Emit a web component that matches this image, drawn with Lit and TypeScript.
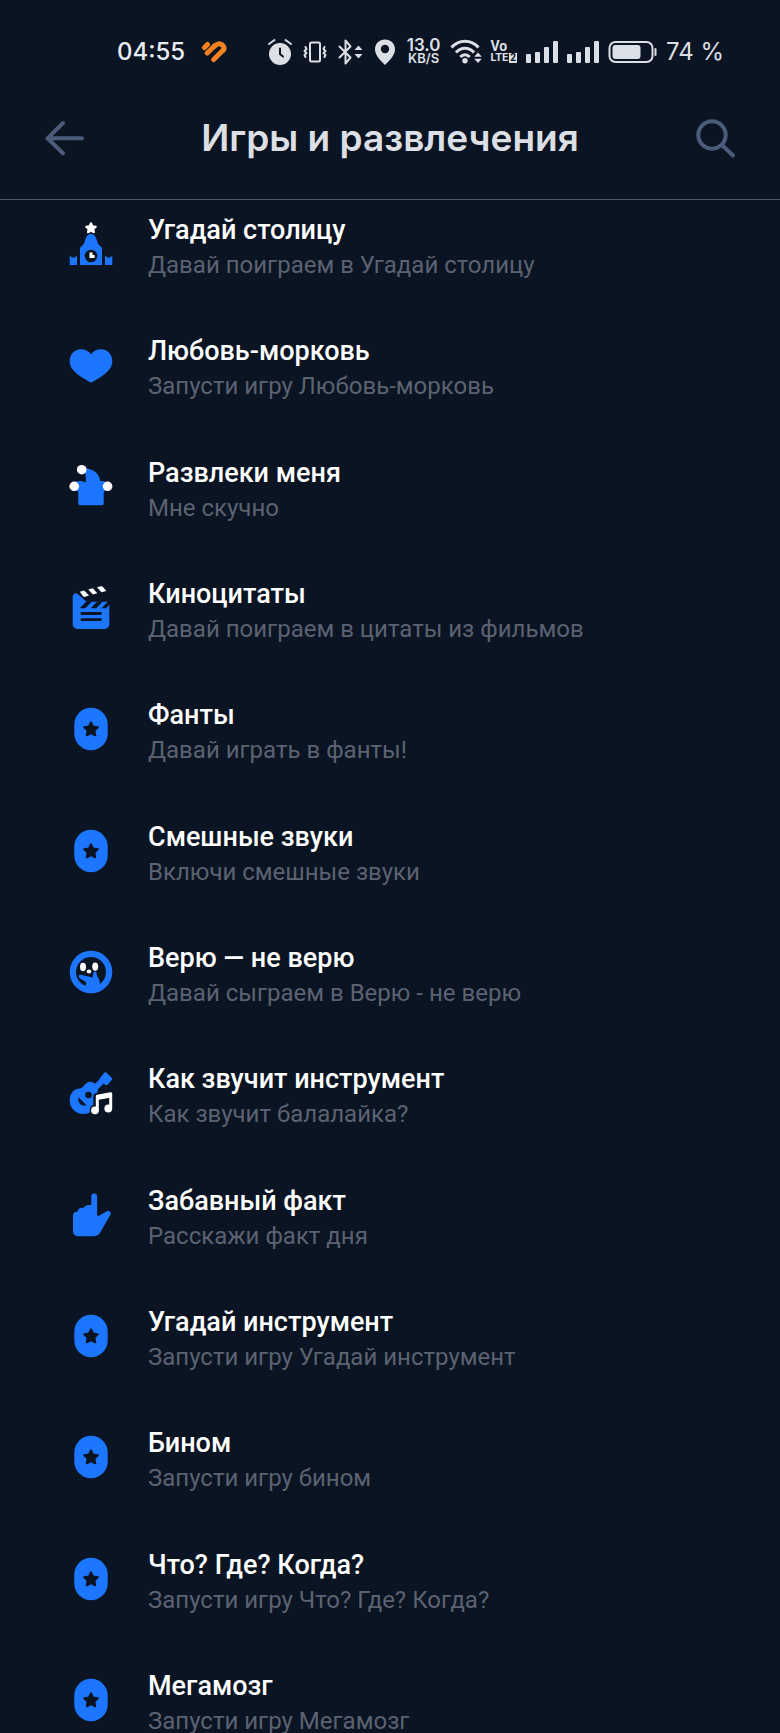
import { LitElement, html, css, svg, SVGTemplateResult } from "lit";
import { customElement, property } from "lit/decorators.js";

type IconName = "tower" | "heart" | "jester" | "clapper" | "token" | "face" | "guitar" | "finger";

interface Game {
  icon: IconName;
  title: string;
  phrase: string;
}

const GAMES: Game[] = [
  { icon: "tower", title: "Угадай столицу", phrase: "Давай поиграем в Угадай столицу" },
  { icon: "heart", title: "Любовь-морковь", phrase: "Запусти игру Любовь-морковь" },
  { icon: "jester", title: "Развлеки меня", phrase: "Мне скучно" },
  { icon: "clapper", title: "Киноцитаты", phrase: "Давай поиграем в цитаты из фильмов" },
  { icon: "token", title: "Фанты", phrase: "Давай играть в фанты!" },
  { icon: "token", title: "Смешные звуки", phrase: "Включи смешные звуки" },
  { icon: "face", title: "Верю — не верю", phrase: "Давай сыграем в Верю - не верю" },
  { icon: "guitar", title: "Как звучит инструмент", phrase: "Как звучит балалайка?" },
  { icon: "finger", title: "Забавный факт", phrase: "Расскажи факт дня" },
  { icon: "token", title: "Угадай инструмент", phrase: "Запусти игру Угадай инструмент" },
  { icon: "token", title: "Бином", phrase: "Запусти игру бином" },
  { icon: "token", title: "Что? Где? Когда?", phrase: "Запусти игру Что? Где? Когда?" },
  { icon: "token", title: "Мегамозг", phrase: "Запусти игру Мегамозг" },
];

const ICONS: Record<IconName, SVGTemplateResult> = {
  tower: svg`
    <path class="white line" d="M24 3.200l1.500 3 3.300.500-2.400 2.300.600 3.300-3-1.500-3 1.500.600-3.300-2.400-2.300 3.300-.500z"/>
    <path class="blue" d="M13 45V28.500c0-1.200.6-1.800 1.600-2.300 1.700-1 2.500-2.600 3.300-5.200C18.900 17.400 20.300 14 24 14s5.100 3.400 6.100 7c.8 2.600 1.600 4.200 3.300 5.200 1 .5 1.600 1.100 1.600 2.300V45z"/>
    <path class="blue" d="M2.700 45v-9.500l2.300 2h2.700l2.300-2V45zM38 45v-9.500l2.300 2H43l2.300-2V45z"/>
    <circle class="dark" cx="24" cy="36" r="6.300"/>
    <path class="hand" d="M24 32.500V36.500h3.600"/>`,
  heart: svg`
    <path class="blue" d="M24 41.500C22.500 41 17.500 38.200 13 35 7 30.700 2.700 26.500 2.700 20c0-7 5-11.800 11.300-11.800 4.500 0 8 2 10 5 2-3 5.500-5 10-5 6.300 0 11.300 4.800 11.300 11.800 0 6.500-4.300 10.700-10.300 15-4.500 3.200-9.500 6-11 6.500z"/>`,
  jester: svg`
    <path class="blue" d="M14.700 5.500C24.500 4.500 32 9.500 33.300 18.300c3-.6 6.200.2 8 3.700l-2.800 5.500c-1 .3-1.800 1.300-1.800 2.500v10.500c0 1-.7 1.700-1.700 1.700H13c-1 0-1.700-.7-1.700-1.700V30c0-1.200-.6-2-1.600-2.500L6.500 20c3-2.500 8.500-2.800 12.200-.4.500-3.500.3-6.600-.7-9.600z"/>
    <circle class="white" cx="14.700" cy="6.700" r="4.800"/>
    <circle class="white" cx="7.200" cy="23.300" r="4.800"/>
    <circle class="white" cx="40.600" cy="23.300" r="4.800"/>`,
  clapper: svg`
    <path class="blue" d="M5.700 12.500C5.700 10.500 7.500 9 9.300 9.200c.8.100 1.400.6 2 1.200l8.200 7.300h21c1 0 1.800.8 1.800 1.800v20.800c0 2.700-2 4.700-4.700 4.700H10.400c-2.700 0-4.700-2-4.700-4.700z"/>
    <path class="dark" d="M19.500 17.500l-6.800 6.700h5.600l6.600-6.700zM30.300 17.500l-6.600 6.700h5.500l6.600-6.700zM41 17.500l-6.500 6.700H39l4-4v-2.700z"/>
    <rect class="dark" x="13.500" y="28" width="21.300" height="2.900" rx="1.300"/>
    <rect class="dark" x="13.500" y="34.200" width="21.300" height="2.900" rx="1.300"/>
    <path class="white" d="M12.800 7.700l4.300-1.100 5 5-4 1.200c-.8.100-1.500 0-2-.6zM21.200 5.500l4.500-1.200 4.600 5-4.400 1.300zM30 3.200l4-1c.7-.1 1.300 0 1.700.6l3.700 4.100-4.900 1.300z"/>`,
  token: svg`
    <rect class="blue" x="7.300" y="2.800" width="33.400" height="42.400" rx="16.700"/>
    <path class="dark darkline" d="M24 17.300l2.100 4.300 4.700.7-3.400 3.300.8 4.700-4.200-2.200-4.200 2.200.8-4.700-3.400-3.300 4.700-.7z"/>`,
  face: svg`
    <path class="blue" fill-rule="evenodd" d="M24 2.700a21.300 21.300 0 1 1 0 42.600 21.300 21.300 0 0 1 0-42.600zM24 9a15 15 0 1 0 0 30 15 15 0 0 0 0-30z"/>
    <ellipse class="white" cx="16" cy="19" rx="3" ry="4.200"/>
    <ellipse class="white" cx="28.200" cy="18.600" rx="3" ry="4.200"/>
    <ellipse class="white" cx="22" cy="23.500" rx="2.300" ry="2"/>
    <path class="blue" d="M13.500 26.800l7 1.500 5 1.200c.6-1.600.7-3.200.9-4.800.2-1.500 2.900-1.500 3.100.2.300 2.700 1.500 4.500 2.700 6.700l1 5.800L24 41.500l-6-3c1.300-1.800 1.500-3.300.5-4.800l-5-3c-2.300-1.300-2.100-4.300 0-3.900z"/>`,
  guitar: svg`
    <path class="bluestroke" d="M25 22L37 10"/>
    <path class="blue" d="M37.300 3.800c.7-.7 1.600-.7 2.300-.1l5 5c.7.7.7 1.600.1 2.400l-4.200 4.600c-.6.6-1.600.7-2.300.1l-5-4.600c-.7-.7-.8-1.600-.2-2.300z"/>
    <path class="blue" d="M19 14.500c3-2.800 6.800-2.200 9.500.6 3.300 3.300 3 7 .8 10.400-1.500 2.400-.6 5-.8 8.500-.5 6.500-5.500 11-12 11C8.500 45 2.700 39 2.700 31.200c0-6.500 4-11.400 10-11.700 3-.2 3.500-2.400 6.300-5z"/>
    <circle class="dark" cx="21.500" cy="26" r="3.300"/>
    <path class="dark" d="M11.300 28.200l8.500 8.300h-3.500c-3.500-.3-5.600-4.300-5-8.300z"/>
    <path class="noteedge" d="M30.300 41V28L43.700 25.300V38.500"/>
    <circle class="noteedge" cx="28.500" cy="41" r="1.800"/>
    <path class="note" d="M30.300 41V27.300L43.700 24.800V38.500M30.300 29.500L43.700 27"/>
    <circle class="white" cx="28" cy="41.300" r="3.900"/>
    <circle class="white" cx="41.300" cy="39.500" r="3.900"/>`,
  finger: svg`
    <path class="blue" d="M24.300 5.400a2.900 2.900 0 0 1 5.800 0v18.200c0 1.200 1.200 1.700 2.300.9l7-3.900c2.800-1.500 5.500.7 3.800 3.500L33.500 41c-1.800 2.900-3.800 4.200-7.300 4.200H12c-4 0-6-2-6-6V24.400c0-2.300 1.800-3.900 4.500-3.600.3-3 3-4.600 6-3.800 1.300-2.500 4.300-3.500 7.800-3z"/>`,
};

const shapeStyles = css`
  svg { display: block; fill: none; }
  .blue { fill: #1d76ff; }
  .white { fill: #fff; }
  .dark { fill: #0a1422; }
  .line { stroke: #fff; stroke-width: 2; stroke-linejoin: round; }
  .darkline { stroke: #0a1422; stroke-width: 2; stroke-linejoin: round; }
  .hand { stroke: #fff; stroke-width: 3; }
  .bluestroke { stroke: #1d76ff; stroke-width: 6; }
  .note { stroke: #fff; stroke-width: 3; stroke-linejoin: round; }
  .noteedge { stroke: #0a1422; stroke-width: 8; stroke-linejoin: round; }
`;

@customElement("status-bar")
export class StatusBar extends LitElement {
  static styles = css`
    :host {
      display: flex;
      align-items: center;
      height: 48px;
      padding: 28px 56px 0 117px;
      color: #dcdfe5;
      font-family: Inter, Roboto, sans-serif;
      font-size: 24px;
      line-height: 32px;
      white-space: nowrap;
    }
    svg { display: block; fill: none; stroke: none; flex: none; }
    .time { color: #e9edf3; font-weight: 500; }
    .fit { margin-left: 16px; }
    .tray { display: flex; align-items: center; gap: 9px; margin-left: auto; }
    .stack { display: flex; flex-direction: column; align-items: center; font-weight: 600; }
    .speed { font-size: 17px; line-height: 13px; }
    .unit { font-size: 13px; line-height: 13px; }
    .volte { font-family: Roboto, sans-serif; font-size: 14px; line-height: 12px; font-weight: 700; align-items: flex-start; }
    .lte { display: flex; align-items: center; gap: 1px; font-size: 11px; }
    .sim { background: #dcdfe5; color: #0a1422; font-size: 10px; line-height: 10px; padding: 0 1px; }
    .ink { fill: #dcdfe5; }
    .cut { fill: #0a1422; }
    .pen { stroke: #dcdfe5; stroke-width: 2; stroke-linecap: round; stroke-linejoin: round; }
    .cutpen { stroke: #0a1422; stroke-width: 2; stroke-linecap: round; }
    .arc { stroke: #dcdfe5; stroke-width: 3; }
    .orange { stroke: #f58220; stroke-width: 5; stroke-linecap: round; stroke-linejoin: round; }
  `;

  private bars() {
    return html`<svg width="32" height="24" viewBox="0 0 32 24" aria-hidden="true">
      <rect class="ink" x="0" y="14" width="5" height="9" rx="1"/>
      <rect class="ink" x="9" y="12" width="5" height="11" rx="1"/>
      <rect class="ink" x="18" y="7" width="5" height="16" rx="1"/>
      <rect class="ink" x="27" y="1" width="5" height="22" rx="1"/>
    </svg>`;
  }

  render() {
    return html`
      <time class="time">04:55</time>
      <svg class="fit" width="26" height="22" viewBox="0 0 26 22" aria-hidden="true">
        <path class="orange" d="M3.500 6.500L6.500 3.500M6.300 12L13.500 5M12.700 18.500L22.300 9"/>
        <path class="orange" d="M13.500 5C16 2.500 19 2.200 21 3.800s2.800 3.500 1.300 5.200"/>
      </svg>
      <div class="tray">
        <svg width="26" height="28" viewBox="0 0 26 28" aria-hidden="true">
          <circle class="ink" cx="13" cy="16" r="11"/>
          <path class="pen" d="M2 6l5.500-4M24 6l-5.500-4"/>
          <path class="cutpen" d="M13 10.500V16l3 2.500"/>
        </svg>
        <svg width="26" height="26" viewBox="0 0 26 26" aria-hidden="true">
          <rect class="pen" x="8" y="3.500" width="10" height="19" rx="1.500"/>
          <path class="pen" d="M3.500 8l1 2-2 2 2 2-2 2 1 2M22.500 8l-1 2 2 2-2 2 2 2-1 2"/>
        </svg>
        <svg width="26" height="28" viewBox="0 0 26 28" aria-hidden="true">
          <path class="pen" d="M2.500 8.500L13.500 19.500 8.500 25.500V2.500L13.500 8.500 2.500 19.500"/>
          <path class="ink" d="M21.500 7.500l4 4.500h-8zM21.500 20.500l4-4.500h-8z"/>
        </svg>
        <svg width="26" height="28" viewBox="0 0 26 28" aria-hidden="true">
          <path class="ink" d="M13 1.500c6 0 10 4.300 10 9.700 0 6-5.500 11.300-10 15.800-4.500-4.500-10-9.800-10-15.800C3 5.800 7 1.500 13 1.500z"/>
          <circle class="cut" cx="13" cy="11" r="4.200"/>
        </svg>
        <span class="stack"><span class="speed">13.0</span><span class="unit">KB/S</span></span>
        <svg width="32" height="28" viewBox="0 0 32 28" aria-hidden="true">
          <path class="arc" d="M1.500 9.500C9 1 21 1 28.500 9.500M6 14.500c5-5.600 13-5.600 18 0M10.300 19c2.700-3 6.700-3 9.400 0"/>
          <circle class="ink" cx="15" cy="22.800" r="2.700"/>
          <path class="ink" d="M28 14.500l3.800 4.200h-7.600zM28 25l3.800-4.200h-7.600z"/>
        </svg>
        <span class="stack volte"><span>Vo</span><span class="lte">LTE<span class="sim">2</span></span></span>
        ${this.bars()} ${this.bars()}
        <svg width="49" height="24" viewBox="0 0 49 24" aria-hidden="true">
          <rect class="pen" x="1.500" y="2" width="43" height="20" rx="6"/>
          <rect class="ink" x="4.500" y="5" width="28" height="14" rx="3"/>
          <path class="pen" d="M47.500 9v6"/>
        </svg>
        <span>74 %</span>
      </div>
    `;
  }
}

@customElement("game-row")
export class GameRow extends LitElement {
  @property({ attribute: false }) game!: Game;

  static styles = [
    shapeStyles,
    css`
      :host { display: block; }
      .row {
        display: flex;
        align-items: center;
        gap: 33px;
        width: 100%;
        padding: 0 32px 0 67px;
        border: 0;
        background: none;
        color: #fff;
        font-family: Roboto, "Noto Sans", sans-serif;
        text-align: left;
        cursor: pointer;
      }
      .icon { flex: none; }
      .text { display: flex; flex-direction: column; gap: 4px; min-width: 0; }
      .title { font-size: 27px; line-height: 38px; font-weight: 500; }
      .phrase { color: #5c6271; font-size: 24px; line-height: 24px; }
    `,
  ];

  render() {
    return html`
      <button class="row" type="button">
        <svg class="icon" width="48" height="48" viewBox="0 0 48 48" aria-hidden="true">${ICONS[this.game.icon]}</svg>
        <span class="text">
          <span class="title">${this.game.title}</span>
          <span class="phrase">${this.game.phrase}</span>
        </span>
      </button>
    `;
  }
}

@customElement("app-root")
export class AppRoot extends LitElement {
  static styles = css`
    :host {
      display: flex;
      flex-direction: column;
      min-height: 100vh;
      background: #0a1422;
      color: #fff;
    }
    .header {
      display: flex;
      align-items: center;
      justify-content: space-between;
      height: 123px;
      padding: 0 40px;
      border-bottom: 1px solid #4a586e;
    }
    .heading {
      margin: 0;
      color: #dcdfe4;
      font-family: Inter, Roboto, sans-serif;
      font-size: 37px;
      line-height: 44px;
      font-weight: 600;
    }
    .action { padding: 0; border: 0; background: none; cursor: pointer; }
    .glyph { display: block; fill: none; stroke: #4a5c7a; stroke-width: 4; stroke-linecap: round; stroke-linejoin: round; }
    .games {
      display: flex;
      flex: 1;
      flex-direction: column;
      justify-content: space-between;
      gap: 48px;
      margin: 0;
      padding: 11px 0 0;
      list-style: none;
    }
  `;

  render() {
    return html`
      <status-bar></status-bar>
      <header class="header">
        <button class="action" type="button" aria-label="Назад">
          <svg class="glyph" width="48" height="48" viewBox="0 0 48 48"><path d="M23 9L7.500 24.300l15.500 15M7.500 24.300h34.500"/></svg>
        </button>
        <h1 class="heading">Игры и развлечения</h1>
        <button class="action" type="button" aria-label="Поиск">
          <svg class="glyph" width="48" height="48" viewBox="0 0 48 48"><circle cx="20" cy="21" r="13.700"/><path d="M30 31l11 10.500"/></svg>
        </button>
      </header>
      <ul class="games">
        ${GAMES.map((game) => html`<li><game-row .game=${game}></game-row></li>`)}
      </ul>
    `;
  }
}
